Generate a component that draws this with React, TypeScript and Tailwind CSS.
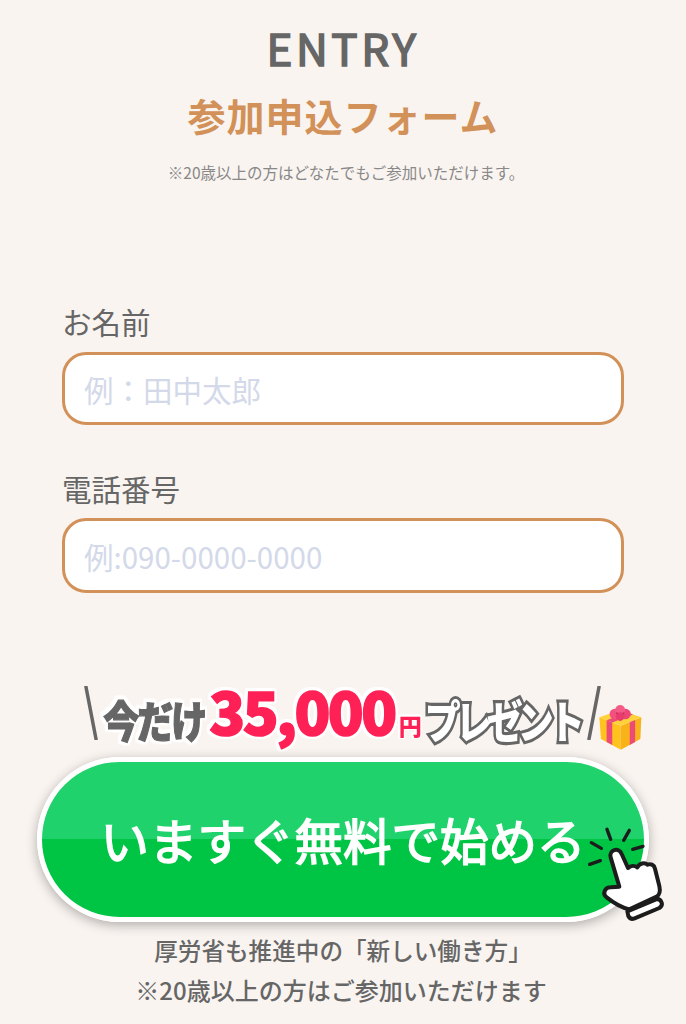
import React from 'react';

const FONT = "font-['Noto_Sans_CJK_JP','Noto_Sans',sans-serif]";

function Gift() {
  return (
    <svg width="45" height="47" viewBox="30 22 134 142" className="ml-[-4px] mt-[28px] shrink-0">
      <path d="M33 62 L98 88 L98 160 L38 128 Z" fill="#ffc21f" />
      <path d="M160 62 L98 88 L98 160 L157 128 Z" fill="#f9b21a" />
      <path d="M33 62 L96 40 L160 62 L98 88 Z" fill="#ffd23c" />
      <path d="M55 71 L72 78 L72 146 L55 137 Z" fill="#ee4a78" />
      <path d="M125 77 L141 70 L141 137 L125 146 Z" fill="#ee4a78" />
      <path d="M55 71 L118 48 L135 54 L72 78 Z" fill="#ee4a78" />
      <circle cx="80" cy="52" r="16" fill="#f2517f" />
      <circle cx="112" cy="52" r="16" fill="#ee4674" />
      <circle cx="96" cy="40" r="15" fill="#f45c88" />
      <circle cx="96" cy="60" r="13" fill="#e83d6c" />
      <circle cx="86" cy="50" r="3" fill="#c92f5c" />
      <circle cx="106" cy="50" r="3" fill="#c92f5c" />
    </svg>
  );
}

function Hand() {
  return (
    <svg
      width="180"
      height="150"
      viewBox="0 0 540 450"
      className="pointer-events-none absolute left-[463px] top-[23px]"
    >
      <g stroke="#1c1c1c" strokeWidth="10" strokeLinecap="round" fill="none">
        <path d="M274 188 L304 205" />
        <path d="M321 148 L332 178" />
        <path d="M388 151 L371 181" />
        <path d="M429 199 L398 208" />
        <path d="M269 253 L301 242" />
      </g>
      <path
        d="M332 232 C326 210 356 200 365 222 L384 264 C392 256 404 256 412 262 C418 250 434 246 442 254 C452 250 462 254 465 266 L478 318 C481 332 480 344 470 350 L388 388 C370 384 340 368 320 352 C306 342 314 322 332 322 L358 320 Z"
        fill="#ffffff"
        stroke="#1c1c1c"
        strokeWidth="12"
        strokeLinejoin="round"
      />
      <path
        d="M382 394 L468 358 C476 356 482 360 485 368 C488 376 484 380 478 384 L402 416 C394 418 388 414 385 408 Z"
        fill="#ffffff"
        stroke="#1c1c1c"
        strokeWidth="12"
        strokeLinejoin="round"
      />
    </svg>
  );
}

function Field({ label, placeholder, boxH, labelGap }: { label: string; placeholder: string; boxH: string; labelGap: string }) {
  return (
    <label className="block">
      <span className={`block text-[29.5px] leading-[36px] text-[#666666] ${labelGap}`}>{label}</span>
      <input
        placeholder={placeholder}
        className={`block w-full ${boxH} rounded-[24px] border-[3.5px] border-[#d29158] bg-white px-[19px] text-[29.5px] text-[#666666] outline-none placeholder:text-[#d3d9e9]`}
      />
    </label>
  );
}

export default function App() {
  return (
    <div className={`h-[1024px] overflow-hidden bg-[#f9f4f0] ${FONT}`}>
      <header className="flex flex-col items-center pt-[17px]">
        <h2 className="text-[44px] leading-[60px] tracking-[3.5px] text-[#666666] [-webkit-text-stroke:1.6px_#666666]">ENTRY</h2>
        <h1 className="mt-[12px] text-[38px] font-bold leading-[52px] tracking-[1px] text-[#d29158]">参加申込フォーム</h1>
        <p className="mt-[20px] pl-[6px] text-[15.5px] leading-[22px] text-[#888888]">※20歳以上の方はどなたでもご参加いただけます。</p>
      </header>

      <form className="mt-[120px] px-[62px]">
        <Field label="お名前" placeholder="例：田中太郎" boxH="h-[73px]" labelGap="mb-[13px]" />
        <div className="h-[45px]" />
        <Field label="電話番号" placeholder="例:090-0000-0000" boxH="h-[75px]" labelGap="mb-[12px]" />
      </form>

      <div className="mt-[90px] flex h-[60px] items-center justify-center pl-[40px]">
        <svg width="16" height="54" viewBox="0 0 16 54" className="mr-[4px] shrink-0">
          <path d="M3 1 L13 53" stroke="#666666" strokeWidth="3.5" strokeLinecap="round" />
        </svg>
        <span className="whitespace-nowrap font-black">
          <span className="inline-block scale-y-[1.2] text-[36px] tracking-[-2px] text-[#666666] [-webkit-text-stroke:1px_#666666] [filter:drop-shadow(2.5px_0_0_#fff)_drop-shadow(-2.5px_0_0_#fff)_drop-shadow(0_2.5px_0_#fff)_drop-shadow(0_-2.5px_0_#fff)]">今だけ</span>
          <span className="mx-[4px] inline-block text-[59px] leading-[60px] tracking-[-2.5px] text-[#ff2156] [-webkit-text-stroke:1.6px_#ff2156] [filter:drop-shadow(2.5px_0_0_#fff)_drop-shadow(-2.5px_0_0_#fff)_drop-shadow(0_2.5px_0_#fff)_drop-shadow(0_-2.5px_0_#fff)]">35,000</span>
          <span className="inline-block text-[23px] text-[#ff2156] [filter:drop-shadow(1.5px_0_0_#fff)_drop-shadow(-1.5px_0_0_#fff)_drop-shadow(0_1.5px_0_#fff)_drop-shadow(0_-1.5px_0_#fff)]">円</span>
          <span className="ml-[3px] inline-block scale-y-[1.25] text-[36px] tracking-[-5px] text-white [-webkit-text-stroke:5px_#666666] [paint-order:stroke_fill]">プレゼント</span>
        </span>
        <svg width="16" height="54" viewBox="0 0 16 54" className="ml-[6px] shrink-0">
          <path d="M13 1 L3 53" stroke="#666666" strokeWidth="3.5" strokeLinecap="round" />
        </svg>
        <Gift />
      </div>

      <div className="relative mx-[37px] mt-[14px] w-[612px]">
        <button
          type="button"
          className="flex h-[165px] w-full items-center justify-center rounded-full border-[5px] border-white bg-[linear-gradient(#1fd26b_0%,#1fd26b_50%,#00c544_50%,#00c544_100%)] text-[48.5px] text-white shadow-[0_3px_12px_rgba(0,0,0,0.3)] [-webkit-text-stroke:1.6px_#ffffff]"
        >
          いますぐ無料で始める
        </button>
        <Hand />
      </div>

      <div className="mt-[9px] text-center font-medium leading-[39px] text-[#666666]">
        <p className="text-[23.6px]">厚労省も推進中の「新しい働き方」</p>
        <p className="pr-[4px] text-[24px]">※20歳以上の方はご参加いただけます</p>
      </div>
    </div>
  );
}
